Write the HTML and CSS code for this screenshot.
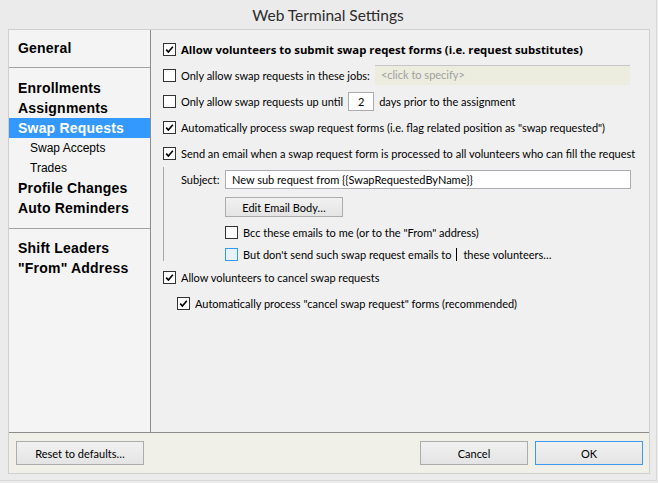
FILE: index.html
```html
<!DOCTYPE html>
<html>
<head>
<meta charset="utf-8">
<link rel="stylesheet" href="styles.css">
</head>
<body>
<div class="window">
  <div class="title">Web Terminal Settings</div>
  <div class="frame">
    <div class="main">
      <nav class="sidebar">
        <div class="nav-item">General</div>
        <div class="nav-sep"></div>
        <div class="nav-item">Enrollments</div>
        <div class="nav-item">Assignments</div>
        <div class="nav-item selected">Swap Requests</div>
        <div class="nav-item sub">Swap Accepts</div>
        <div class="nav-item sub">Trades</div>
        <div class="nav-item">Profile Changes</div>
        <div class="nav-item">Auto Reminders</div>
        <div class="nav-sep second"></div>
        <div class="nav-item">Shift Leaders</div>
        <div class="nav-item">"From" Address</div>
      </nav>
      <section class="content">
        <div class="row">
          <span class="cb checked"><svg viewBox="0 0 13 13"><path d="M2.6 6.6 L5.2 9.4 L10.4 3.2"/></svg></span>
          <span class="bold">Allow volunteers to submit swap reqest forms (i.e. request substitutes)</span>
        </div>
        <div class="row">
          <span class="cb"></span>
          <span>Only allow swap requests in these jobs:</span>
          <span class="jobs-box">&lt;click to specify&gt;</span>
        </div>
        <div class="row">
          <span class="cb"></span>
          <span>Only allow swap requests up until</span>
          <span class="num-box">2</span>
          <span>days prior to the assignment</span>
        </div>
        <div class="row">
          <span class="cb checked"><svg viewBox="0 0 13 13"><path d="M2.6 6.6 L5.2 9.4 L10.4 3.2"/></svg></span>
          <span>Automatically process swap request forms (i.e. flag related position as "swap requested")</span>
        </div>
        <div class="row">
          <span class="cb checked"><svg viewBox="0 0 13 13"><path d="M2.6 6.6 L5.2 9.4 L10.4 3.2"/></svg></span>
          <span>Send an email when a swap request form is processed to all volunteers who can fill the request</span>
        </div>
        <div class="email-group">
          <div class="subject-row">
            <span class="subject-label">Subject:</span>
            <span class="subject-box">New sub request from {{SwapRequestedByName}}</span>
          </div>
          <div class="btn-row">
            <span class="btn edit-btn">Edit Email Body…</span>
          </div>
          <div class="row small indent">
            <span class="cb"></span>
            <span>Bcc these emails to me (or to the "From" address)</span>
          </div>
          <div class="row last indent">
            <span class="cb focus"></span>
            <span>But don't send such swap request emails to</span>
            <span class="link">these volunteers…</span>
          </div>
        </div>
        <div class="row cancel-row">
          <span class="cb checked"><svg viewBox="0 0 13 13"><path d="M2.6 6.6 L5.2 9.4 L10.4 3.2"/></svg></span>
          <span>Allow volunteers to cancel swap requests</span>
        </div>
        <div class="row sub-row">
          <span class="cb checked"><svg viewBox="0 0 13 13"><path d="M2.6 6.6 L5.2 9.4 L10.4 3.2"/></svg></span>
          <span>Automatically process "cancel swap request" forms (recommended)</span>
        </div>
      </section>
    </div>
    <div class="footer">
      <span class="btn reset-btn">Reset to defaults…</span>
      <div class="footer-right">
        <span class="btn dlg-btn">Cancel</span>
        <span class="btn dlg-btn ok">OK</span>
      </div>
    </div>
  </div>
</div>
</body>
</html>
```
FILE: styles.css
```css
* { box-sizing: border-box; }
html, body { margin: 0; padding: 0; }
body {
  background: #ebebeb;
  font-family: "Lato", "Open Sans", sans-serif;
  font-size: 11px;
  color: #000;
}
.window {
  width: 657px;
  height: 481px;
  border-right: 1px solid #d9d9d9;
  border-bottom: 1px solid #d9d9d9;
}
.title {
  height: 29px;
  line-height: 31px;
  text-align: center;
  font-size: 15.5px;
  color: #2b2b2b;
}
.frame {
  margin-left: 8px;
  width: 642px;
  height: 445px;
  border: 1px solid #cfcfcf;
  display: flex;
  flex-direction: column;
}
.main {
  display: flex;
  height: 402px;
}
.sidebar {
  flex: none;
  width: 142px;
  background: #f4f4f4;
  border-right: 1px solid #8c8c8c;
  padding-top: 8px;
  font-family: "Liberation Sans", Arial, sans-serif;
}
.nav-item {
  height: 20px;
  line-height: 20px;
  padding-left: 9px;
  font-weight: bold;
  font-size: 14px;
  letter-spacing: 0.2px;
  color: #000;
}
.nav-item.sub {
  font-weight: normal;
  font-size: 12px;
  letter-spacing: 0;
  padding-left: 21px;
}
.nav-item.selected {
  background: #3399ff;
  color: #fff;
}
.nav-sep {
  height: 1px;
  background: #a3a3a3;
  margin: 9px 0 10px;
}
.nav-sep.second {
  margin: 10px 0 9px;
}
.content {
  flex: 1;
  min-width: 0;
  overflow: hidden;
  background: #f0f0f0;
  padding: 6px 0 0 12px;
  display: flex;
  flex-direction: column;
}
.row {
  display: flex;
  align-items: center;
  height: 26px;
  gap: 5px;
  white-space: nowrap;
}
.bold {
  font-family: "Open Sans", sans-serif;
  font-weight: bold;
  font-size: 11.35px;
}
.cb {
  width: 13px;
  height: 13px;
  flex: none;
  border: 1px solid #333;
  background: #fff;
  display: inline-flex;
}
.cb svg {
  width: 11px;
  height: 11px;
  fill: none;
  stroke: #000;
  stroke-width: 1.9;
}
.cb.focus {
  border-color: #3399ff;
  background: #e8f2fc;
}
.jobs-box {
  width: 255px;
  height: 20px;
  line-height: 18px;
  padding-left: 6px;
  background: #ececdf;
  border-top: 1px solid #c6c6c6;
  color: #a0a0a0;
}
.num-box {
  width: 26px;
  height: 19px;
  line-height: 17px;
  text-align: center;
  background: #fff;
  border: 1px solid #acacac;
}
.email-group {
  border-left: 1px solid #a8a8a8;
  padding-left: 17px;
  margin-top: 1px;
}
.subject-row {
  height: 25px;
  display: flex;
  align-items: center;
}
.subject-label {
  width: 44px;
}
.subject-box {
  width: 406px;
  height: 19px;
  line-height: 17px;
  padding-left: 6px;
  background: #fff;
  border: 1px solid #abadb3;
}
.btn-row {
  height: 29px;
  padding: 5px 0 0 44px;
}
.btn {
  display: inline-flex;
  align-items: center;
  justify-content: center;
  background: linear-gradient(#f1f1f1, #e4e4e4);
  border: 1px solid #acacac;
}
.edit-btn {
  width: 118px;
  height: 20px;
}
.row.indent {
  padding-left: 44px;
}
.row.small {
  height: 22px;
}
.row.last {
  height: 13px;
  margin-top: 5px;
}
.link {
  border-left: 1px solid #000;
  padding-left: 6px;
  line-height: 13px;
}
.cancel-row {
  margin-top: 3px;
}
.sub-row {
  padding-left: 14px;
}
.footer {
  height: 41px;
  border-top: 1px solid #8c8c8c;
  background: #f0f0e9;
  display: flex;
  justify-content: space-between;
  padding: 8px 6px 0 7px;
}
.reset-btn {
  width: 128px;
  height: 24px;
}
.footer-right {
  display: flex;
  gap: 7px;
}
.dlg-btn {
  width: 108px;
  height: 24px;
}
.dlg-btn.ok {
  border-color: #3c98f0;
}
```
